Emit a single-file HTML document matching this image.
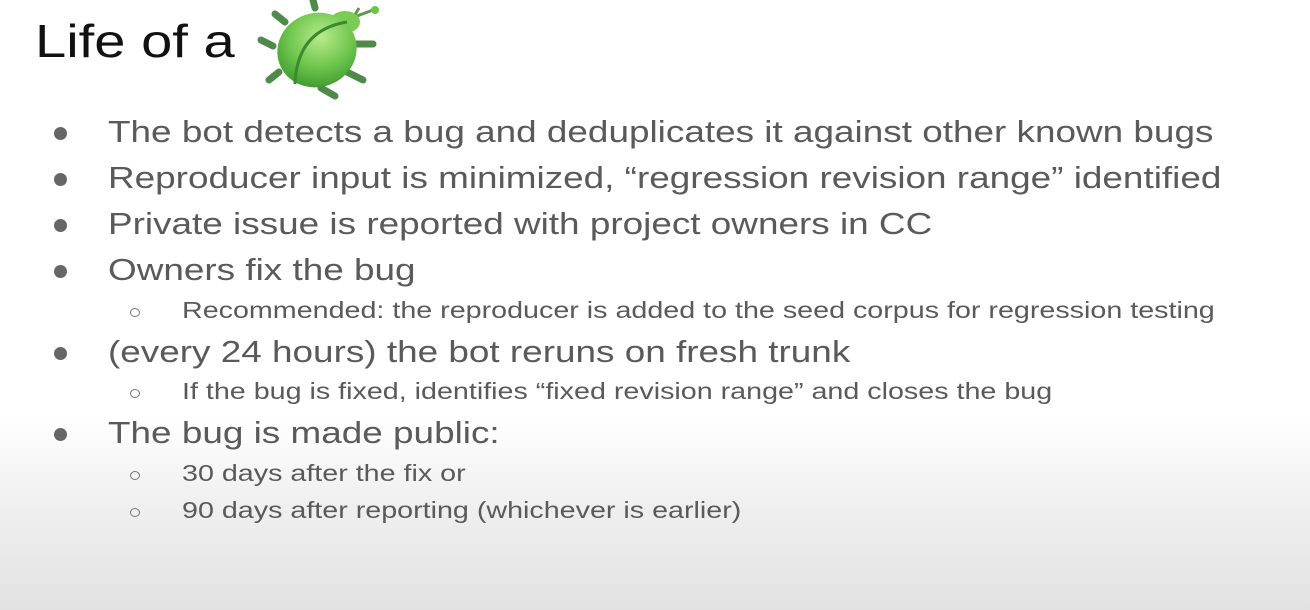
<!DOCTYPE html>
<html><head><meta charset="utf-8"><style>
html,body{margin:0;padding:0}
body{width:1310px;height:610px;overflow:hidden;position:relative;font-family:"Liberation Sans",Arial,sans-serif;
background:linear-gradient(to bottom,#fff 0px,#fff 420px,#f0f0f0 500px,#e2e2e2 610px);}
.t{position:absolute;white-space:nowrap;color:#5a5a5a;transform-origin:0 0}
.m{font-size:31px;left:108px;transform:scaleX(1.19)}
.s{font-size:23.5px;left:182px;transform:scaleX(1.22)}
.b{position:absolute;width:13px;height:13px;border-radius:50%;background:#666;left:54px}
.c{position:absolute;width:10px;height:9px;border-radius:50%;border:1.5px solid #777;left:130px;box-sizing:border-box}
</style></head><body>
<div class="t" style="left:35px;top:14px;font-size:46px;color:#111;transform:scaleX(1.22)">Life of a</div>
<svg style="position:absolute;left:255px;top:0" width="130" height="100" viewBox="0 0 130 100">
<defs><radialGradient id="g" cx="0.6" cy="0.35" r="0.7"><stop offset="0" stop-color="#b8ec8a"/><stop offset="0.6" stop-color="#6cc44c"/><stop offset="1" stop-color="#3e9a30"/></radialGradient></defs>
<g stroke="#4f8a4a" stroke-width="7" stroke-linecap="round">
<line x1="30" y1="22" x2="20" y2="14"/><line x1="18" y1="46" x2="6" y2="40"/><line x1="24" y1="72" x2="14" y2="80"/>
<line x1="60" y1="8" x2="58" y2="0"/><line x1="95" y1="44" x2="118" y2="44"/><line x1="92" y1="72" x2="108" y2="80"/><line x1="66" y1="88" x2="80" y2="96"/>
</g>
<path d="M98 18 L104 8 M102 16 L118 10" stroke="#5a9a48" stroke-width="3"/>
<circle cx="120" cy="10" r="4" fill="#6cc44c"/>
<ellipse cx="90" cy="22" rx="15" ry="11" fill="#7acc55"/>
<ellipse cx="62" cy="50" rx="40" ry="37" fill="url(#g)" transform="rotate(-20 62 50)"/>
<path d="M92 22 Q42 30 40 84" stroke="#3a8a30" stroke-width="3" fill="none"/>
</svg>
<div class="b" style="top:127px"></div><div class="t m" style="top:114px">The bot detects a bug and deduplicates it against other known bugs</div>
<div class="b" style="top:173px"></div><div class="t m" style="top:160px">Reproducer input is minimized, “regression revision range” identified</div>
<div class="b" style="top:219px"></div><div class="t m" style="top:206px">Private issue is reported with project owners in CC</div>
<div class="b" style="top:265px"></div><div class="t m" style="top:252px">Owners fix the bug</div>
<div class="c" style="top:308px"></div><div class="t s" style="top:297px">Recommended: the reproducer is added to the seed corpus for regression testing</div>
<div class="b" style="top:347px"></div><div class="t m" style="top:334px">(every 24 hours) the bot reruns on fresh trunk</div>
<div class="c" style="top:389px"></div><div class="t s" style="top:378px">If the bug is fixed, identifies “fixed revision range” and closes the bug</div>
<div class="b" style="top:428px"></div><div class="t m" style="top:415px">The bug is made public:</div>
<div class="c" style="top:471px"></div><div class="t s" style="top:460px">30 days after the fix or</div>
<div class="c" style="top:508px"></div><div class="t s" style="top:497px">90 days after reporting (whichever is earlier)</div>
</body></html>
